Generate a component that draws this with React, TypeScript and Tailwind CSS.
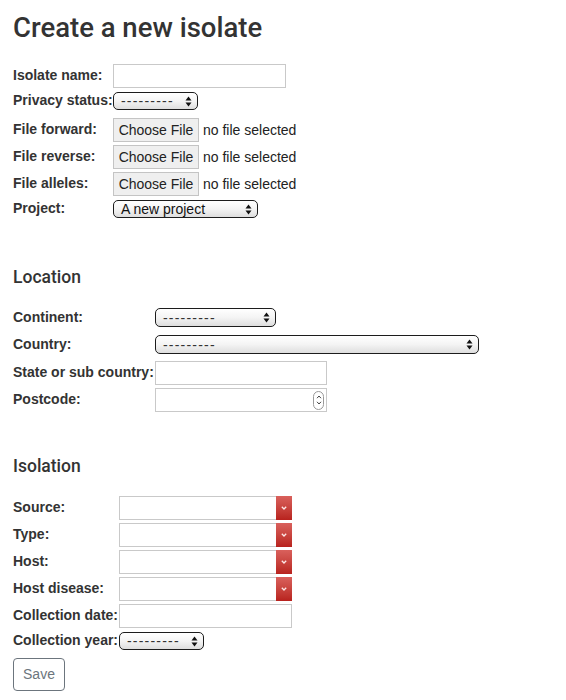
import React from "react";

const Arrows = () => (
  <svg width="7" height="11" viewBox="0 0 7 11" className="shrink-0">
    <polygon points="3.5,0.5 0.5,4.5 6.5,4.5" fill="#111" />
    <polygon points="0.5,6.5 6.5,6.5 3.5,10.5" fill="#111" />
  </svg>
);

function SafariSelect({ cls, text, dashes }: { cls: string; text: string; dashes?: boolean }) {
  return (
    <div
      className={
        "flex items-center justify-between h-[18px] border border-[#1c1c1c] rounded-[5px] bg-gradient-to-b from-white via-[#f4f4f4] to-[#dedede] pl-[7px] pr-[5px] text-[14px] leading-none text-[#111] " +
        cls
      }
    >
      <span className={dashes ? "tracking-[1.2px] text-[#333]" : ""}>{text}</span>
      <Arrows />
    </div>
  );
}

function Label({ cls, children }: { cls: string; children: React.ReactNode }) {
  return (
    <div className={"shrink-0 whitespace-nowrap font-bold text-[14px] leading-[18px] text-[#333] -mt-[2px] " + cls}>{children}</div>
  );
}

function TextInput({ cls }: { cls: string }) {
  return <div className={"h-[24px] border border-[#c9c9c9] bg-white " + cls} />;
}

function FileInput() {
  return (
    <div className="flex items-center">
      <div className="h-[24px] w-[86px] flex items-center justify-center border border-[#c4c4c4] bg-[#efefef] text-[14px] text-[#222]">
        Choose File
      </div>
      <span className="ml-[4px] text-[14px] text-[#222]">no file selected</span>
    </div>
  );
}

function RedSelect() {
  return (
    <div className="h-[24px] w-[173px] flex border border-[#c9c9c9] bg-white">
      <div className="flex-1" />
      <div className="w-[16px] -my-px -mr-px flex items-center justify-center bg-gradient-to-b from-[#d9605c] to-[#b8211d]">
        <svg width="6" height="4" viewBox="0 0 6 4">
          <polyline points="0.8,0.8 3,3 5.2,0.8" fill="none" stroke="#fde8e8" strokeWidth="1.3" />
        </svg>
      </div>
    </div>
  );
}

function NumberInput() {
  return (
    <div className="h-[24px] w-[172px] flex items-center justify-end border border-[#c9c9c9] bg-white pr-[2px]">
      <div className="h-[19px] w-[11px] rounded-full border border-[#9a9a9a] flex flex-col items-center justify-center gap-[2px]">
        <svg width="6" height="4" viewBox="0 0 6 4">
          <polyline points="1,3.2 3,1 5,3.2" fill="none" stroke="#444" strokeWidth="1" />
        </svg>
        <svg width="6" height="4" viewBox="0 0 6 4">
          <polyline points="1,0.8 3,3 5,0.8" fill="none" stroke="#444" strokeWidth="1" />
        </svg>
      </div>
    </div>
  );
}

export default function App() {
  return (
    <div className="w-[566px] h-[700px] bg-white pl-[13px] font-['Liberation_Sans',Arial,sans-serif] text-[#333] overflow-hidden">
      <h1 className="mt-[12px] h-[32px] flex items-center font-['Roboto',sans-serif] font-medium text-[27.5px] text-[#333]">
        Create a new isolate
      </h1>

      {/* Section 1 */}
      <div className="mt-[20px] flex items-center h-[24px]">
        <Label cls="w-[100px]">Isolate name:</Label>
        <TextInput cls="w-[173px]" />
      </div>
      <div className="mt-[4px] flex items-center h-[18px]">
        <Label cls="w-[100px]">Privacy status:</Label>
        <SafariSelect cls="w-[85px]" text="---------" dashes />
      </div>
      <div className="mt-[8px] flex items-center h-[24px]">
        <Label cls="w-[100px]">File forward:</Label>
        <FileInput />
      </div>
      <div className="mt-[3px] flex items-center h-[24px]">
        <Label cls="w-[100px]">File reverse:</Label>
        <FileInput />
      </div>
      <div className="mt-[3px] flex items-center h-[24px]">
        <Label cls="w-[100px]">File alleles:</Label>
        <FileInput />
      </div>
      <div className="mt-[4px] flex items-center h-[18px]">
        <Label cls="w-[100px]">Project:</Label>
        <SafariSelect cls="w-[145px]" text="A new project" />
      </div>

      {/* Location */}
      <h2 className="mt-[47px] h-[24px] flex items-center font-['Roboto',sans-serif] font-medium text-[17.5px] text-[#333]">
        Location
      </h2>
      <div className="mt-[19px] flex items-center h-[19px]">
        <Label cls="w-[142px]">Continent:</Label>
        <SafariSelect cls="w-[121px] h-[19px]" text="---------" dashes />
      </div>
      <div className="mt-[8px] flex items-center h-[19px]">
        <Label cls="w-[142px]">Country:</Label>
        <SafariSelect cls="w-[324px] h-[19px]" text="---------" dashes />
      </div>
      <div className="mt-[7px] flex items-center h-[24px]">
        <Label cls="w-[142px]">State or sub country:</Label>
        <TextInput cls="w-[172px]" />
      </div>
      <div className="mt-[3px] flex items-center h-[24px]">
        <Label cls="w-[142px]">Postcode:</Label>
        <NumberInput />
      </div>

      {/* Isolation */}
      <h2 className="mt-[42px] h-[24px] flex items-center font-['Roboto',sans-serif] font-medium text-[17.5px] text-[#333]">
        Isolation
      </h2>
      <div className="mt-[18px] flex items-center h-[24px]">
        <Label cls="w-[106px]">Source:</Label>
        <RedSelect />
      </div>
      <div className="mt-[3px] flex items-center h-[24px]">
        <Label cls="w-[106px]">Type:</Label>
        <RedSelect />
      </div>
      <div className="mt-[3px] flex items-center h-[24px]">
        <Label cls="w-[106px]">Host:</Label>
        <RedSelect />
      </div>
      <div className="mt-[3px] flex items-center h-[24px]">
        <Label cls="w-[106px]">Host disease:</Label>
        <RedSelect />
      </div>
      <div className="mt-[3px] flex items-center h-[24px]">
        <Label cls="w-[106px]">Collection date:</Label>
        <TextInput cls="w-[173px]" />
      </div>
      <div className="mt-[4px] flex items-center h-[18px]">
        <Label cls="w-[106px]">Collection year:</Label>
        <SafariSelect cls="w-[85px]" text="---------" dashes />
      </div>
      <button className="mt-[8px] h-[33px] w-[52px] rounded-[4px] border border-[#6c757d] text-[14px] text-[#6c757d] bg-white">
        Save
      </button>
    </div>
  );
}
